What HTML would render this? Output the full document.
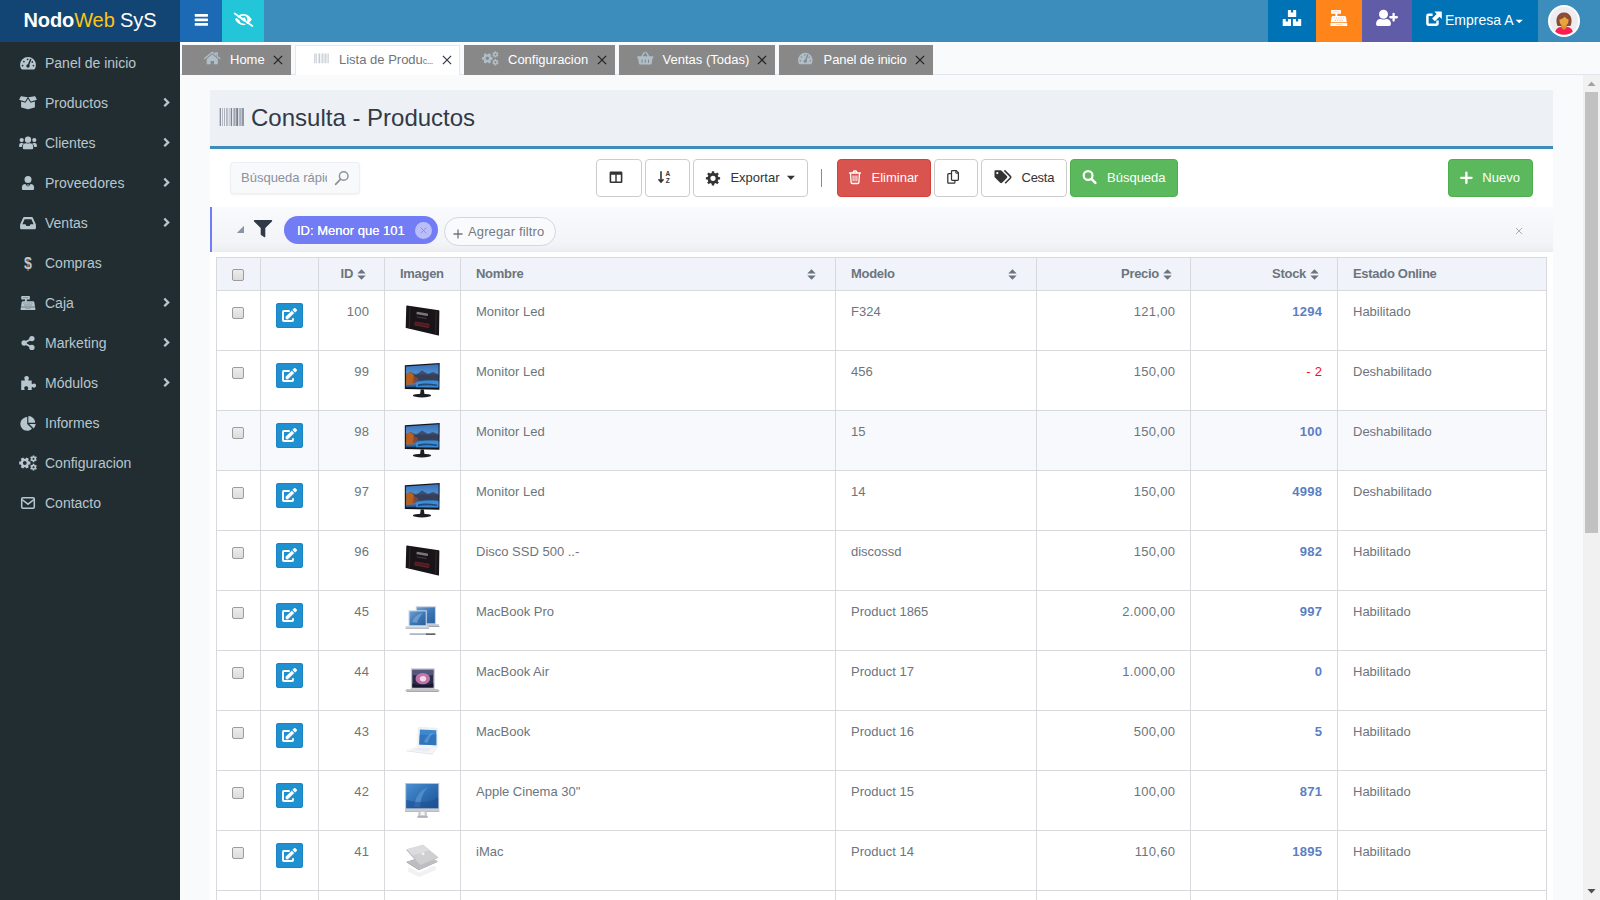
<!DOCTYPE html>
<html lang="es">
<head>
<meta charset="utf-8">
<title>Consulta - Productos</title>
<style>
*{box-sizing:border-box;margin:0;padding:0}
html,body{width:1600px;height:900px;overflow:hidden}
body{font-family:"Liberation Sans",sans-serif;font-size:13px;color:#6c757d;background:#f9fafc;position:relative}
.abs{position:absolute}
svg{display:block}
/* header */
#hdr{position:absolute;left:0;top:0;width:1600px;height:42px;background:#3c8dbc}
#logo{position:absolute;left:0;top:0;width:180px;height:42px;background:#124573;color:#fff;font-size:20px;line-height:40px;text-align:center;white-space:nowrap;letter-spacing:-0.1px}
#logo b{font-weight:bold}
#logo .w{color:#fdc413}
.hb{position:absolute;top:0;height:42px}
/* sidebar */
#side{position:absolute;left:0;top:42px;width:180px;height:858px;background:#222d32}
.mi{position:absolute;left:0;width:180px;height:40px;margin-top:1px;color:#b8c7ce;font-size:14px;line-height:40px}
.mi span{position:absolute;left:45px;top:0;white-space:nowrap}
.mi svg.ic{position:absolute;left:18px;top:10.500px}
.mi svg.ch{position:absolute;left:162px;top:14px}
/* tabs */
#tabs{position:absolute;left:180px;top:42px;width:1420px;height:33px;background:#f9fafc;border-bottom:1px solid #dfe6ef}
#tabs:before{content:"";position:absolute;left:0;top:0;width:100%;height:3px;background:linear-gradient(#fff,#f9fafc)}
.tab{position:absolute;top:3px;height:30px;background:#888;color:#fff;font-size:13px;line-height:29px;white-space:nowrap}
.tab.act{background:#fff;color:#6c757d;box-shadow:inset 1px 1px 0 #e3e8f1,inset -1px 0 0 #e3e8f1}
.tab span{position:absolute;top:0}
.tab svg{position:absolute}
/* panel */
#ph{position:absolute;left:210px;top:90px;width:1343px;height:56px;background:#edf0f5}
#pl{position:absolute;left:210px;top:146px;width:1343px;height:3px;background:#3c8dbc}
#tb{position:absolute;left:210px;top:149px;width:1343px;height:751px;background:#fff}
#title{position:absolute;left:251px;top:101px;font-size:24px;line-height:34px;color:#313a46;white-space:nowrap}
.btn{position:absolute;top:159px;height:38px;border-radius:4px;font-size:13px;line-height:35px;white-space:nowrap}
.btn.l{background:#fff;border:1px solid #ccc;color:#333}
.btn.r{background:#d9534f;border:1px solid #d43f3a;color:#fff}
.btn.g{background:#5cb85c;border:1px solid #4cae4c;color:#fff}
.btn span{position:absolute;top:0}
.btn svg{position:absolute}
/* filter */
#fl{position:absolute;left:210px;top:207px;width:1343px;height:45px;background:linear-gradient(#f9fafc 0,#f5f6f9 55%,#f3f4f7 80%,#ecedf1 100%);border-left:2px solid #727cf5}
/* table */
#tbl{position:absolute;left:216px;top:257px;width:1330px;border-collapse:collapse;table-layout:fixed;font-size:13px;color:#6c757d}
#tbl td,#tbl th{border:1px solid #d8d9dc;vertical-align:top;overflow:hidden;white-space:nowrap}
#tbl th{letter-spacing:-.3px;height:33px;background:#f1f3fa;color:#6c757d;font-weight:bold;text-align:left;padding:0 15px;line-height:31px;position:relative}
#tbl td{height:60px;background:#fff;padding:11.500px 15px 0 15px;line-height:17px;position:relative}
#tbl tr.hv td{background:#f8f9fc}
#tbl td.r{text-align:right;letter-spacing:.3px;padding-right:14.700px}#tbl th.r{text-align:right}
#tbl .st{font-weight:bold;color:#5b7fc4}
#tbl .neg{color:#fa0d0d;font-weight:normal}
.cb{position:absolute;left:14.500px;width:12px;height:12px;border:1px solid #9c9c9c;border-radius:2px;background:linear-gradient(#ececec,#dcdcdc)}
.eb{position:absolute;left:15px;top:12px;width:27px;height:25px;background:#1f91d0;border-radius:3px;box-shadow:inset 0 0 0 1px #1c84c2}
.th{position:absolute;left:17px;top:9px;width:40px;height:40px}
.so{position:absolute;top:11px}
</style>
</head>
<body>
<!--HEADER-->
<div id="hdr">
<div id="logo"><b>Nodo</b><span class="w">Web</span> SyS</div>
<div class="hb" style="left:180px;width:42px;background:#1c6ab4"></div>
<div class="hb" style="left:222px;width:42px;background:#23c6d8"></div>
<div class="hb" style="left:1268px;width:48px;background:#0073b7"></div>
<div class="hb" style="left:1316px;width:46px;background:#ff851b"></div>
<div class="hb" style="left:1362px;width:50px;background:#605ca8"></div>
<div class="hb" style="left:1412px;width:126px;background:#0073b7"></div>
<svg class="abs" style="left:192px;top:10px" width="18" height="20" viewBox="192 10 18 20"><rect x="194.700" y="14.100" width="13.300" height="2.600" rx=".6" fill="#fff"/><rect x="194.700" y="18.600" width="13.300" height="2.600" rx=".6" fill="#fff"/><rect x="194.700" y="23.100" width="13.300" height="2.600" rx=".6" fill="#fff"/></svg><svg class="abs" style="left:231px;top:9px" width="26" height="22" viewBox="231 9 26 22"><path d="M235 19.600 C237.300 15.600 240.200 14 243.400 14 S249.500 15.600 251.800 19.600 C249.500 23.600 246.600 25.200 243.400 25.200 S237.300 23.600 235 19.600z" fill="#fff"/><circle cx="243.400" cy="19.600" r="3.900" fill="#23c6d8"/><circle cx="243.400" cy="19.600" r="2.300" fill="#fff"/><path d="M241.300 18.900 a2.300 2.300 0 0 1 2.300-1.700" stroke="#23c6d8" stroke-width=".9" fill="none"/><path d="M233.400 14.900 L250.800 27.300" stroke="#23c6d8" stroke-width="1.600"/><path d="M234.700 13.500 L252.400 26" stroke="#fff" stroke-width="1.750" stroke-linecap="round"/></svg><svg class="abs" style="left:1280px;top:8px" width="24" height="20" viewBox="1280 8 24 20"><path d="M1288.4 9.9 H1290.9295000000002 v2.9819999999999998 l1.1205000000000003 -0.852 l1.1205000000000003 0.852 v-2.9819999999999998 H1295.7 a.5.5 0 0 1 .5.5 V16.5 a.5.5 0 0 1 -.5.5 H1288.4 a.5.5 0 0 1 -.5-.5 V10.4 a.5.5 0 0 1 .5-.5z" fill="#fff"/><path d="M1283.2 18.9 H1285.7295000000001 v2.9819999999999998 l1.1205000000000003 -0.852 l1.1205000000000003 0.852 v-2.9819999999999998 H1290.5 a.5.5 0 0 1 .5.5 V25.5 a.5.5 0 0 1 -.5.5 H1283.2 a.5.5 0 0 1 -.5-.5 V19.4 a.5.5 0 0 1 .5-.5z" fill="#fff"/><path d="M1293.4 18.9 H1295.9295000000002 v2.9819999999999998 l1.1205000000000003 -0.852 l1.1205000000000003 0.852 v-2.9819999999999998 H1300.7 a.5.5 0 0 1 .5.5 V25.5 a.5.5 0 0 1 -.5.5 H1293.4 a.5.5 0 0 1 -.5-.5 V19.4 a.5.5 0 0 1 .5-.5z" fill="#fff"/></svg><svg class="abs" style="left:1328px;top:8px" width="22" height="20" viewBox="1328 8 22 20"><g transform="translate(1330.400,10)"><path d="M1.3 0 h8.600 a.6.6 0 0 1 .6.6 v2.600 a.6.6 0 0 1 -.6.6 h-2.900 v2.200 h7.250 a1.400 1.400 0 0 1 1.350 1.050 l.8 5.300 h-16 l.8-5.300 a1.400 1.400 0 0 1 1.350-1.050 h2.450 v-2.200 h-3.700 a.6.6 0 0 1 -.6-.6 v-2.600 a.6.6 0 0 1 .6-.6z" fill="#fff"/><path d="M.5 12.900 h15.800 a.5.5 0 0 1 .5.5 v2 a.5.5 0 0 1 -.5.5 h-15.800 a.5.5 0 0 1 -.5-.5 v-2 a.500.500 0 0 1 .5-.5z" fill="#fff"/><rect x="2.500" y="1.200" width="6.200" height="1.300" fill="#ff851b" opacity=".3"/><rect x="3.2" y="7.300" width="1" height="1.300" fill="#ff851b" opacity=".45"/><rect x="5.5" y="7.300" width="1" height="1.300" fill="#ff851b" opacity=".45"/><rect x="7.8" y="7.300" width="1" height="1.300" fill="#ff851b" opacity=".45"/><rect x="10.1" y="7.300" width="1" height="1.300" fill="#ff851b" opacity=".45"/><rect x="12.4" y="7.300" width="1" height="1.300" fill="#ff851b" opacity=".45"/><rect x="4.4" y="9.700" width="1" height="1" fill="#ff851b" opacity=".8"/><rect x="6.7" y="9.700" width="1" height="1" fill="#ff851b" opacity=".8"/><rect x="9" y="9.700" width="1" height="1" fill="#ff851b" opacity=".8"/><rect x="11.3" y="9.700" width="1" height="1" fill="#ff851b" opacity=".8"/><rect x="5.400" y="13.900" width="6" height="1" fill="#ff851b" opacity=".3"/></g></svg><svg class="abs" style="left:1374px;top:8px" width="26" height="20" viewBox="1374 8 26 20"><circle cx="1383.500" cy="14.300" r="4.500" fill="#fff"/><path d="M1376.100 24.300 v-1.100 a4.300 4.300 0 0 1 4.300-4.300 h.5 a6 6 0 0 0 5.200 0 h.5 a4.300 4.300 0 0 1 4.300 4.300 v1.100 a1.600 1.600 0 0 1 -1.600 1.600 h-11.600 a1.600 1.600 0 0 1 -1.600-1.600z" fill="#fff"/><path d="M1393.600 14 v6.500 M1390.350 17.250 h6.500" stroke="#fff" stroke-width="2.300" stroke-linecap="round"/></svg><svg class="abs" style="left:1424px;top:9px" width="20" height="19" viewBox="1424 9 20 19"><path d="M1437.500 20.500 v3.100 a1.200 1.200 0 0 1 -1.200 1.200 H1428.600 a1.200 1.200 0 0 1 -1.200-1.200 V15.900 a1.200 1.200 0 0 1 1.200-1.200 h4" fill="none" stroke="#fff" stroke-width="2.500"/><path d="M1434.400 11.600 h6.900 a.5.5 0 0 1 .5.5 v6.900 l-2.300-2.300 -4.600 4.600 -2.800-2.800 4.600-4.600z" fill="#fff"/></svg><div class="abs" style="left:1445px;top:0;line-height:40px;font-size:14px;color:#fff;white-space:nowrap">Empresa A</div><svg class="abs" style="left:1514px;top:18px" width="10" height="7" viewBox="1514 18 10 7"><path d="M1515.600 19.700 h7.200 l-3.600 3.600z" fill="#fff"/></svg><svg class="abs" style="left:1548px;top:5px" width="32" height="32" viewBox="0 0 32 32"><defs><clipPath id="av"><circle cx="16" cy="16" r="13.800"/></clipPath></defs><circle cx="16" cy="16" r="16" fill="#fff"/><circle cx="16" cy="16" r="14" fill="#ececf1"/><g clip-path="url(#av)"><path d="M9.500 21 C7.300 16 8.200 7.600 16 7.600 s8.700 8.400 6.500 13.400z" fill="#8a4a36"/><path d="M6.600 32 c0-7.600 2.600-10.400 9.400-10.400 s9.400 2.800 9.400 10.400z" fill="#fa1e4e"/><path d="M13.500 19.500 h5 v3.200 l-2.500 2.300 -2.500-2.300z" fill="#d9902f"/><ellipse cx="16" cy="15.400" rx="4.500" ry="5.500" fill="#eaa43c"/><path d="M11.200 14.500 c.4-3.400 2.600-4.600 5.100-4.400 c2.500.2 4.300 1.600 4.500 4.400 c-1.800-.6-3.300-1.700-4.200-3.100 c-1.300 1.700-3 2.700-5.400 3.100z" fill="#8a4a36"/></g></svg>
</div>
<!--SIDEBAR-->
<div id="side">
<div class="mi" style="top:0px"><svg class="ic" width="20" height="18" viewBox="0 0 20 18"><path d="M2.1 10.9 a7.9 7.9 0 0 1 15.8 0 c0 1.6-.45 3-1.2 4.2 a.9.9 0 0 1 -.75.4 h-11.9 a.9.9 0 0 1 -.75-.4 c-.75-1.2-1.2-2.6-1.2-4.2z" fill="#b8c7ce"/><path d="M12.6 5.4 L10.3 11.6" stroke="#222d32" stroke-width="1.5" stroke-linecap="round"/><circle cx="10" cy="12.1" r="1.75" fill="#222d32"/><circle cx="4.6" cy="11.6" r=".85" fill="#222d32"/><circle cx="5.9" cy="7.6" r=".85" fill="#222d32"/><circle cx="9.6" cy="5.3" r=".85" fill="#222d32"/><circle cx="14.3" cy="7.9" r=".85" fill="#222d32"/><circle cx="15.4" cy="11.6" r=".85" fill="#222d32"/></svg><span>Panel de inicio</span></div>
<div class="mi" style="top:40px"><svg class="ic" width="20" height="18" viewBox="0 0 20 18"><path d="M1.1 5.7 L2.7 2.6 a.5.5 0 0 1 .5-.25 L9.7 3.2 L7.3 7.3 a.5.5 0 0 1 -.55.2z M18.9 5.7 L17.3 2.6 a.5.5 0 0 0 -.5-.25 L10.3 3.2 L12.7 7.3 a.5.5 0 0 0 .55.2z" fill="#b8c7ce"/><path d="M3.1 7.6 V12.9 a.7.7 0 0 0 .5.65 L9.8 15.2 a.9.9 0 0 0 .4 0 L16.4 13.55 a.7.7 0 0 0 .5-.65 V7.6 L13.4 8.6 a1.2 1.2 0 0 1 -1.35-.55 L10 4.7 L7.95 8.05 a1.2 1.2 0 0 1 -1.35.55z" fill="#b8c7ce"/></svg><span>Productos</span><svg class="ch" width="10" height="12" viewBox="0 0 10 12"><path d="M2.300 1.500 L6.200 5.400 L2.300 9.300" fill="none" stroke="#b8c7ce" stroke-width="2.300"/></svg></div>
<div class="mi" style="top:80px"><svg class="ic" width="20" height="18" viewBox="0 0 20 18"><circle cx="10" cy="5.7" r="3.15" fill="#b8c7ce"/><circle cx="3.7" cy="6.1" r="2.1" fill="#b8c7ce"/><circle cx="16.3" cy="6.1" r="2.1" fill="#b8c7ce"/><path d="M4.8 14 v-1.3 a3.4 3.4 0 0 1 3.4-3.4 h.4 a3.6 3.6 0 0 0 2.8 0 h.4 a3.4 3.4 0 0 1 3.4 3.4 v1.3 a1.3 1.3 0 0 1 -1.3 1.3 h-7.8 a1.3 1.3 0 0 1 -1.3-1.3z" fill="#b8c7ce"/><path d="M1.1 12.3 v-1 a2.2 2.2 0 0 1 2.2-2.2 h.9 a2.2 2.2 0 0 1 1.5.6 a4.5 4.5 0 0 0 -2 3.2 h-2 a.6.6 0 0 1 -.6-.6z M18.9 12.3 v-1 a2.2 2.2 0 0 0 -2.2-2.2 h-.9 a2.2 2.2 0 0 0 -1.5.6 a4.5 4.5 0 0 1 2 3.2 h2 a.6.6 0 0 0 .6-.6z" fill="#b8c7ce"/></svg><span>Clientes</span><svg class="ch" width="10" height="12" viewBox="0 0 10 12"><path d="M2.300 1.500 L6.200 5.400 L2.300 9.300" fill="none" stroke="#b8c7ce" stroke-width="2.300"/></svg></div>
<div class="mi" style="top:120px"><svg class="ic" width="20" height="18" viewBox="0 0 20 18"><circle cx="10" cy="5.5" r="3.5" fill="#b8c7ce"/><path d="M3.9 14.7 v-.9 a3.7 3.7 0 0 1 3.5-3.7 L10 13.5 L12.6 10.1 a3.7 3.7 0 0 1 3.5 3.7 v.9 a1.3 1.3 0 0 1 -1.3 1.3 h-9.6 a1.3 1.3 0 0 1 -1.3-1.3z" fill="#b8c7ce"/><path d="M9.1 10.4 h1.8 l-.5 1 .7 3.2 L10 16 8.9 14.6 l.7-3.2z" fill="#b8c7ce"/></svg><span>Proveedores</span><svg class="ch" width="10" height="12" viewBox="0 0 10 12"><path d="M2.300 1.500 L6.200 5.400 L2.300 9.300" fill="none" stroke="#b8c7ce" stroke-width="2.300"/></svg></div>
<div class="mi" style="top:160px"><svg class="ic" width="20" height="18" viewBox="0 0 20 18"><path fill-rule="evenodd" d="M2.1 10.6 L5 3.9 a1.3 1.3 0 0 1 1.2-.8 h7.6 a1.3 1.3 0 0 1 1.2.8 L17.9 10.6 V14 a1.3 1.3 0 0 1 -1.3 1.3 H3.4 a1.3 1.3 0 0 1 -1.3-1.3z M4.4 10.2 h3.1 l.9 1.75 h3.2 l.9-1.75 h3.1 L13.4 5.3 H6.6z" fill="#b8c7ce"/></svg><span>Ventas</span><svg class="ch" width="10" height="12" viewBox="0 0 10 12"><path d="M2.300 1.500 L6.200 5.400 L2.300 9.300" fill="none" stroke="#b8c7ce" stroke-width="2.300"/></svg></div>
<div class="mi" style="top:200px"><svg class="ic" width="20" height="18" viewBox="0 0 20 18"><text x="11.500" y="15.200" text-anchor="middle" font-family="Liberation Sans" font-weight="bold" font-size="16.500" fill="#b8c7ce" transform="scale(.86,1)">$</text></svg><span>Compras</span></div>
<div class="mi" style="top:240px"><svg class="ic" width="20" height="18" viewBox="0 0 20 18"><g transform="translate(2.650,2.050) scale(.875)"><path d="M1.3 0 h8.600 a.6.6 0 0 1 .6.6 v2.600 a.6.6 0 0 1 -.6.6 h-2.900 v2.200 h7.250 a1.400 1.400 0 0 1 1.350 1.050 l.8 5.300 h-16 l.8-5.300 a1.400 1.400 0 0 1 1.350-1.050 h2.450 v-2.200 h-3.700 a.6.6 0 0 1 -.6-.6 v-2.600 a.6.6 0 0 1 .6-.6z" fill="#b8c7ce"/><path d="M.5 12.900 h15.800 a.5.5 0 0 1 .5.5 v2 a.5.5 0 0 1 -.5.5 h-15.800 a.5.5 0 0 1 -.5-.5 v-2 a.500.500 0 0 1 .5-.5z" fill="#b8c7ce"/><rect x="2.500" y="1.200" width="6.200" height="1.300" fill="#222d32" opacity=".3"/><rect x="3.2" y="7.300" width="1" height="1.300" fill="#222d32" opacity=".45"/><rect x="5.5" y="7.300" width="1" height="1.300" fill="#222d32" opacity=".45"/><rect x="7.8" y="7.300" width="1" height="1.300" fill="#222d32" opacity=".45"/><rect x="10.1" y="7.300" width="1" height="1.300" fill="#222d32" opacity=".45"/><rect x="12.4" y="7.300" width="1" height="1.300" fill="#222d32" opacity=".45"/><rect x="4.4" y="9.700" width="1" height="1" fill="#222d32" opacity=".8"/><rect x="6.7" y="9.700" width="1" height="1" fill="#222d32" opacity=".8"/><rect x="9" y="9.700" width="1" height="1" fill="#222d32" opacity=".8"/><rect x="11.3" y="9.700" width="1" height="1" fill="#222d32" opacity=".8"/><rect x="5.400" y="13.900" width="6" height="1" fill="#222d32" opacity=".3"/></g></svg><span>Caja</span><svg class="ch" width="10" height="12" viewBox="0 0 10 12"><path d="M2.300 1.500 L6.200 5.400 L2.300 9.300" fill="none" stroke="#b8c7ce" stroke-width="2.300"/></svg></div>
<div class="mi" style="top:280px"><svg class="ic" width="20" height="18" viewBox="0 0 20 18"><path d="M13.9 4.6 L6 9 L13.9 13.4" fill="none" stroke="#b8c7ce" stroke-width="1.8"/><circle cx="13.9" cy="4.6" r="2.65" fill="#b8c7ce"/><circle cx="6.1" cy="9" r="2.65" fill="#b8c7ce"/><circle cx="13.9" cy="13.4" r="2.65" fill="#b8c7ce"/></svg><span>Marketing</span><svg class="ch" width="10" height="12" viewBox="0 0 10 12"><path d="M2.300 1.500 L6.200 5.400 L2.300 9.300" fill="none" stroke="#b8c7ce" stroke-width="2.300"/></svg></div>
<div class="mi" style="top:320px"><svg class="ic" width="20" height="18" viewBox="0 0 20 18"><path d="M3.2 6.6 h3.2 c.5 0 .7-.3.5-.8 c-.3-.5-.6-1-.6-1.7 c0-1.2 1-2.1 2.3-2.1 s2.3.9 2.3 2.1 c0 .7-.3 1.200-.6 1.700 c-.2.500 0 .800.500.800 h2.900 v3 c0 .500.300.700.800.500 c.500-.300.900-.600 1.600-.600 c1.200 0 2 .9 2 2.100 s-.8 2.100-2 2.100 c-.700 0-1.100-.300-1.600-.600 c-.500-.200-.800 0-.800.500 v2.400 h-3.500 c-.500 0-.700-.300-.500-.800 c.300-.400.500-.800.500-1.300 c0-1-.9-1.700-2-1.700 s-2 .7-2 1.700 c0 .5.200.9.500 1.300 c.200.500 0 .800-.500.800 h-3z" fill="#b8c7ce"/></svg><span>Módulos</span><svg class="ch" width="10" height="12" viewBox="0 0 10 12"><path d="M2.300 1.500 L6.200 5.400 L2.300 9.300" fill="none" stroke="#b8c7ce" stroke-width="2.300"/></svg></div>
<div class="mi" style="top:360px"><svg class="ic" width="20" height="18" viewBox="0 0 20 18"><path d="M9.2 3.1 V9.9 L14 14.7 A6.8 6.8 0 1 1 9.2 3.1z" fill="#b8c7ce"/><path d="M10.4 2.1 a6.8 6.8 0 0 1 6.8 6.700 h-6.800z" fill="#b8c7ce"/><path d="M11.3 10.100 h6.400 a6.800 6.800 0 0 1 -2 4.400z" fill="#b8c7ce"/></svg><span>Informes</span></div>
<div class="mi" style="top:400px"><svg class="ic" width="20" height="18" viewBox="0 0 20 18"><path fill-rule="evenodd" d="M10.82 7.48 L12.42 7.56 L12.42 10.44 L10.82 10.52 L10.13 11.72 L10.86 13.14 L8.36 14.59 L7.49 13.24 L6.11 13.24 L5.24 14.59 L2.74 13.14 L3.47 11.72 L2.78 10.52 L1.18 10.44 L1.18 7.56 L2.78 7.48 L3.47 6.28 L2.74 4.86 L5.24 3.41 L6.11 4.76 L7.49 4.76 L8.36 3.41 L10.86 4.86 L10.13 6.28z M4.90 9.00 a1.9 1.9 0 1 0 3.8 0 a1.9 1.9 0 1 0 -3.8 0z" fill="#b8c7ce"/><path fill-rule="evenodd" d="M17.84 3.92 L18.89 3.93 L18.89 5.67 L17.84 5.68 L17.43 6.38 L17.95 7.30 L16.44 8.17 L15.90 7.27 L15.10 7.27 L14.56 8.17 L13.05 7.30 L13.57 6.38 L13.16 5.68 L12.11 5.67 L12.11 3.93 L13.16 3.92 L13.57 3.22 L13.05 2.30 L14.56 1.43 L15.10 2.33 L15.90 2.33 L16.44 1.43 L17.95 2.30 L17.43 3.22z M14.50 4.80 a1.0 1.0 0 1 0 2.0 0 a1.0 1.0 0 1 0 -2.0 0z" fill="#b8c7ce" transform="rotate(30 15.5 4.8)"/><path fill-rule="evenodd" d="M17.84 12.32 L18.89 12.33 L18.89 14.07 L17.84 14.08 L17.43 14.78 L17.95 15.70 L16.44 16.57 L15.90 15.67 L15.10 15.67 L14.56 16.57 L13.05 15.70 L13.57 14.78 L13.16 14.08 L12.11 14.07 L12.11 12.33 L13.16 12.32 L13.57 11.62 L13.05 10.70 L14.56 9.83 L15.10 10.73 L15.90 10.73 L16.44 9.83 L17.95 10.70 L17.43 11.62z M14.50 13.20 a1.0 1.0 0 1 0 2.0 0 a1.0 1.0 0 1 0 -2.0 0z" fill="#b8c7ce" transform="rotate(30 15.5 13.2)"/></svg><span>Configuracion</span></div>
<div class="mi" style="top:440px"><svg class="ic" width="20" height="18" viewBox="0 0 20 18"><rect x="3.7" y="3.7" width="12.6" height="10.6" rx="1.2" fill="none" stroke="#b8c7ce" stroke-width="1.5"/><path d="M4 5.500 L10 10.200 L16 5.500" fill="none" stroke="#b8c7ce" stroke-width="1.5"/></svg><span>Contacto</span></div>

</div>
<!--TABS-->
<div id="tabs">
<div class="tab" style="left:2px;width:109px"><svg class="ti" style="left:21.4px;top:5.450px;width:18.600px;height:16.700px" width="20" height="18" viewBox="0 0 20 18"><path d="M10 4.700 L4 9.700 V15 a.5.5 0 0 0 .5.5 h3.700 v-3.700 h3.600 v3.700 h3.700 a.5.5 0 0 0 .5-.5 V9.700z" fill="#aebfc9"/><path d="M1.800 9.300 L10 2.500 L13.600 5.500 V3.200 h1.700 V6.900 L18.200 9.300" fill="none" stroke="#aebfc9" stroke-width="1.4" stroke-linejoin="round" stroke-linecap="round"/></svg><span style="left:48px">Home</span><svg style="left:90.5px;top:9.500px" width="10" height="10" viewBox="0 0 10 10"><path d="M.9.9 L9.100 9.100 M9.100.9 L.9 9.100" stroke="#222" stroke-width="1.250"/></svg></div>
<div class="tab act" style="left:115px;width:165px"><svg class="ti" style="left:17.4px;top:5.450px;width:18.600px;height:16.700px" width="20" height="18" viewBox="0 0 20 18"><rect x="2.1" y="3.700" width="0.7" height="10.600" fill="#b9bfca"/><rect x="3.6" y="3.700" width="0.4" height="10.600" fill="#b9bfca"/><rect x="4.7" y="3.700" width="0.7" height="10.600" fill="#b9bfca"/><rect x="6.6" y="3.700" width="0.4" height="10.600" fill="#b9bfca"/><rect x="7.7" y="3.700" width="1.1" height="10.600" fill="#b9bfca"/><rect x="9.9" y="3.700" width="0.4" height="10.600" fill="#b9bfca"/><rect x="11" y="3.700" width="0.7" height="10.600" fill="#b9bfca"/><rect x="12.5" y="3.700" width="0.4" height="10.600" fill="#b9bfca"/><rect x="13.6" y="3.700" width="1.1" height="10.600" fill="#b9bfca"/><rect x="15.5" y="3.700" width="0.4" height="10.600" fill="#b9bfca"/><rect x="16.6" y="3.700" width="0.4" height="10.600" fill="#b9bfca"/><rect x="17.3" y="3.700" width="0.6" height="10.600" fill="#b9bfca"/></svg><span style="left:44px">Lista de Produ<span style="position:static;font-size:9px;letter-spacing:-.5px">c...</span></span><svg style="left:146.5px;top:9.500px" width="10" height="10" viewBox="0 0 10 10"><path d="M.9.9 L9.100 9.100 M9.100.9 L.9 9.100" stroke="#313a46" stroke-width="1.250"/></svg></div>
<div class="tab" style="left:284px;width:151px"><svg class="ti" style="left:17.4px;top:5.450px;width:18.600px;height:16.700px" width="20" height="18" viewBox="0 0 20 18"><path fill-rule="evenodd" d="M10.82 7.48 L12.42 7.56 L12.42 10.44 L10.82 10.52 L10.13 11.72 L10.86 13.14 L8.36 14.59 L7.49 13.24 L6.11 13.24 L5.24 14.59 L2.74 13.14 L3.47 11.72 L2.78 10.52 L1.18 10.44 L1.18 7.56 L2.78 7.48 L3.47 6.28 L2.74 4.86 L5.24 3.41 L6.11 4.76 L7.49 4.76 L8.36 3.41 L10.86 4.86 L10.13 6.28z M4.90 9.00 a1.9 1.9 0 1 0 3.8 0 a1.9 1.9 0 1 0 -3.8 0z" fill="#aebfc9"/><path fill-rule="evenodd" d="M17.84 3.92 L18.89 3.93 L18.89 5.67 L17.84 5.68 L17.43 6.38 L17.95 7.30 L16.44 8.17 L15.90 7.27 L15.10 7.27 L14.56 8.17 L13.05 7.30 L13.57 6.38 L13.16 5.68 L12.11 5.67 L12.11 3.93 L13.16 3.92 L13.57 3.22 L13.05 2.30 L14.56 1.43 L15.10 2.33 L15.90 2.33 L16.44 1.43 L17.95 2.30 L17.43 3.22z M14.50 4.80 a1.0 1.0 0 1 0 2.0 0 a1.0 1.0 0 1 0 -2.0 0z" fill="#aebfc9" transform="rotate(30 15.5 4.8)"/><path fill-rule="evenodd" d="M17.84 12.32 L18.89 12.33 L18.89 14.07 L17.84 14.08 L17.43 14.78 L17.95 15.70 L16.44 16.57 L15.90 15.67 L15.10 15.67 L14.56 16.57 L13.05 15.70 L13.57 14.78 L13.16 14.08 L12.11 14.07 L12.11 12.33 L13.16 12.32 L13.57 11.62 L13.05 10.70 L14.56 9.83 L15.10 10.73 L15.90 10.73 L16.44 9.83 L17.95 10.70 L17.43 11.62z M14.50 13.20 a1.0 1.0 0 1 0 2.0 0 a1.0 1.0 0 1 0 -2.0 0z" fill="#aebfc9" transform="rotate(30 15.5 13.2)"/></svg><span style="left:44px">Configuracion</span><svg style="left:132.5px;top:9.500px" width="10" height="10" viewBox="0 0 10 10"><path d="M.9.9 L9.100 9.100 M9.100.9 L.9 9.100" stroke="#222" stroke-width="1.250"/></svg></div>
<div class="tab" style="left:439px;width:156px"><svg class="ti" style="left:17.4px;top:5.450px;width:18.600px;height:16.700px" width="20" height="18" viewBox="0 0 20 18"><path d="M6.300 7 L9 2.600 M13.700 7 L11 2.600" stroke="#aebfc9" stroke-width="1.5" stroke-linecap="round"/><path d="M1.900 6.800 h16.200 a.6.6 0 0 1 .6.6 v.9 a.6.6 0 0 1 -.6.6 h-.3 l-.9 5.600 a1.300 1.300 0 0 1 -1.300 1.100 H4.400 a1.300 1.300 0 0 1 -1.300-1.100 L2.200 8.900 h-.3 a.6.6 0 0 1 -.6-.6 v-.9 a.6.6 0 0 1 .6-.6z" fill="#aebfc9"/><rect x="5.95" y="10" width="1.1" height="3.900" rx=".5" fill="#888"/><rect x="9.45" y="10" width="1.1" height="3.900" rx=".5" fill="#888"/><rect x="12.95" y="10" width="1.1" height="3.900" rx=".5" fill="#888"/></svg><span style="left:43.6px">Ventas (Todas)</span><svg style="left:137.5px;top:9.500px" width="10" height="10" viewBox="0 0 10 10"><path d="M.9.9 L9.100 9.100 M9.100.9 L.9 9.100" stroke="#222" stroke-width="1.250"/></svg></div>
<div class="tab" style="left:599px;width:154px"><svg class="ti" style="left:17.4px;top:5.450px;width:18.600px;height:16.700px" width="20" height="18" viewBox="0 0 20 18"><path d="M2.1 10.9 a7.9 7.9 0 0 1 15.8 0 c0 1.6-.45 3-1.2 4.2 a.9.9 0 0 1 -.75.4 h-11.9 a.9.9 0 0 1 -.75-.4 c-.75-1.2-1.2-2.6-1.2-4.2z" fill="#aebfc9"/><path d="M12.6 5.4 L10.3 11.6" stroke="#888" stroke-width="1.5" stroke-linecap="round"/><circle cx="10" cy="12.1" r="1.75" fill="#888"/><circle cx="4.6" cy="11.6" r=".85" fill="#888"/><circle cx="5.9" cy="7.6" r=".85" fill="#888"/><circle cx="9.6" cy="5.3" r=".85" fill="#888"/><circle cx="14.3" cy="7.9" r=".85" fill="#888"/><circle cx="15.4" cy="11.6" r=".85" fill="#888"/></svg><span style="left:44.6px"><span style="position:static;letter-spacing:-.1px">Panel de inicio</span></span><svg style="left:135.5px;top:9.500px" width="10" height="10" viewBox="0 0 10 10"><path d="M.9.9 L9.100 9.100 M9.100.9 L.9 9.100" stroke="#222" stroke-width="1.250"/></svg></div>

</div>
<!--PANEL-->
<div id="ph"></div><div id="pl"></div><div id="tb"></div>
<div id="title">Consulta - Productos</div>
<div class="abs" style="left:230px;top:162px;width:130px;height:32px;background:#f8f9fb;border:1px solid #edeff4;border-radius:4px;box-shadow:0 1px 2px rgba(200,205,215,.25)"><span class="abs" style="left:10px;top:0;line-height:30px;font-size:13px;color:#8a929b;white-space:nowrap;width:86px;overflow:hidden">Búsqueda rápida</span><svg class="abs" style="left:102px;top:6px" width="18" height="18" viewBox="0 0 18 18"><circle cx="10.700" cy="7" r="4.300" fill="none" stroke="#8a929b" stroke-width="1.500"/><path d="M7.600 10.200 L2.600 15.300" stroke="#8a929b" stroke-width="1.700" stroke-linecap="round"/></svg></div><div class="btn l" style="left:596px;width:46px"></div><div class="btn l" style="left:645px;width:45px"></div><div class="btn l" style="left:693px;width:115px"><span style="left:36.39999999999998px;letter-spacing:0px">Exportar</span></div><div class="btn r" style="left:837px;width:94px"><span style="left:33.5px;letter-spacing:0px">Eliminar</span></div><div class="btn l" style="left:934px;width:44px"></div><div class="btn l" style="left:981px;width:86px"><span style="left:39.5px;letter-spacing:-0.25px">Cesta</span></div><div class="btn g" style="left:1070px;width:108px"><span style="left:36px;letter-spacing:0px">Búsqueda</span></div><div class="btn g" style="left:1448px;width:85px"><span style="left:33.299999999999955px;letter-spacing:0px">Nuevo</span></div><div class="abs" style="left:821px;top:169px;width:1px;height:18px;background:#8a8a8a"></div><svg class="abs" style="left:608px;top:169px" width="17" height="17" viewBox="608 169 17 17"><path fill-rule="evenodd" d="M610.800 171.600 h10.400 a1.200 1.200 0 0 1 1.200 1.200 v9 a1.200 1.200 0 0 1 -1.200 1.200 h-10.400 a1.200 1.200 0 0 1 -1.200-1.200 v-9 a1.200 1.200 0 0 1 1.200-1.200z M611.200 174.700 v6.700 h4.100 v-6.700z M616.700 174.700 v6.700 h4.100 v-6.700z" fill="#333"/></svg><svg class="abs" style="left:656px;top:168px" width="18" height="18" viewBox="656 168 18 18"><path d="M661 171.300 v10.300 M658.500 179.300 L661 182.100 L663.500 179.300" fill="none" stroke="#333" stroke-width="1.600"/><text x="665.600" y="176.100" font-family="Liberation Sans" font-weight="bold" font-size="6.500" fill="#333">A</text><text x="665.800" y="183" font-family="Liberation Sans" font-weight="bold" font-size="6.500" fill="#333">Z</text></svg><svg class="abs" style="left:704px;top:169px" width="18" height="19" viewBox="704 169 18 19"><path fill-rule="evenodd" d="M718.35 177.02 L720.10 177.13 L720.10 179.47 L718.35 179.58 L717.69 181.18 L718.85 182.50 L717.20 184.15 L715.88 182.99 L714.28 183.65 L714.17 185.40 L711.83 185.40 L711.72 183.65 L710.12 182.99 L708.80 184.15 L707.15 182.50 L708.31 181.18 L707.65 179.58 L705.90 179.47 L705.90 177.13 L707.65 177.02 L708.31 175.42 L707.15 174.10 L708.80 172.45 L710.12 173.61 L711.72 172.95 L711.83 171.20 L714.17 171.20 L714.28 172.95 L715.88 173.61 L717.20 172.45 L718.85 174.10 L717.69 175.42z M710.40 178.30 a2.6 2.6 0 1 0 5.2 0 a2.6 2.6 0 1 0 -5.2 0z" fill="#333"/></svg><svg class="abs" style="left:785px;top:174px" width="12" height="8" viewBox="785 174 12 8"><path d="M786.900 175.700 h8 l-4 4.400z" fill="#333"/></svg><svg class="abs" style="left:847px;top:168px" width="16" height="18" viewBox="847 168 16 18"><path d="M850.500 173.400 l.65 9.200 a1 1 0 0 0 1 .9 h5.700 a1 1 0 0 0 1-.9 l.65-9.200" fill="none" stroke="#fff" stroke-width="1.300"/><path d="M849.500 173 h11 M853 172.700 l.8-1.700 h2.400 l.8 1.700" fill="none" stroke="#fff" stroke-width="1.300" stroke-linecap="round" stroke-linejoin="round"/><path d="M853.100 175.500 v5.800 M855 175.500 v5.800 M856.900 175.500 v5.800" stroke="#fff" stroke-width="1"/></svg><svg class="abs" style="left:945px;top:168px" width="16" height="18" viewBox="945 168 16 18"><path d="M951.500 170.600 h4.700 l2.200 2.200 v6.800 a.8.8 0 0 1 -.8.8 h-5.300 a.8.8 0 0 1 -.8-.8 v-8.200 a.800.800 0 0 1 .8-.8z" fill="none" stroke="#333" stroke-width="1.250"/><path d="M955.900 170.800 v2.400 h2.400" fill="none" stroke="#333" stroke-width="1"/><path d="M950.900 173.600 h-2.300 a.8.8 0 0 0 -.8.8 v8 a.8.8 0 0 0 .8.8 h5.500 a.8.800 0 0 0 .8-.8 v-1.500" fill="none" stroke="#333" stroke-width="1.250"/></svg><svg class="abs" style="left:993px;top:168px" width="20" height="18" viewBox="993 168 20 18"><path d="M994.500 171.100 a.9.9 0 0 1 .9-.9 h5 a1.500 1.500 0 0 1 1 .4 l5.500 5.500 a1.250 1.250 0 0 1 0 1.800 l-4.900 4.900 a1.250 1.250 0 0 1 -1.800 0 L994.900 177.400 a1.500 1.500 0 0 1 -.4-1z" fill="#333"/><circle cx="997.300" cy="173.100" r="1.100" fill="#fff"/><path d="M1004.400 170.400 l6 6 a1.100 1.100 0 0 1 0 1.600 l-5.200 5.200" fill="none" stroke="#333" stroke-width="1.500"/></svg><svg class="abs" style="left:1081px;top:168px" width="18" height="18" viewBox="1081 168 18 18"><circle cx="1088.100" cy="175.500" r="4.400" fill="none" stroke="#fff" stroke-width="2.200"/><path d="M1091.700 179.100 L1095.400 182.800" stroke="#fff" stroke-width="2.500" stroke-linecap="round"/></svg><svg class="abs" style="left:1459px;top:170px" width="16" height="16" viewBox="1459 170 16 16"><path d="M1466.400 172.600 v10.400 M1461.200 177.800 h10.400" stroke="#fff" stroke-width="2.300" stroke-linecap="round"/></svg>
<div id="fl"></div>
<svg class="abs" style="left:236px;top:225px" width="9" height="9"><path d="M8 .8 V8 H.8z" fill="#8a96a8"/></svg><svg class="abs" style="left:253px;top:219px" width="20" height="20" viewBox="0 0 20 20"><path d="M1.700 1.100 h16.600 a.8.8 0 0 1 .6 1.400 L12.300 9.100 V17.500 a.8.8 0 0 1 -1.300.6 l-2.900-2 a1 1 0 0 1 -.4-.8 V9.100 L1.100 2.500 a.8.8 0 0 1 .6-1.400z" fill="#313a46"/></svg><div class="abs" style="left:284px;top:216px;width:154px;height:28px;border-radius:14px;background:#727cf5;color:#fff;font-size:13px;line-height:28px"><span class="abs" style="left:13px;top:.7px;white-space:nowrap;text-shadow:0 0 .4px #fff">ID: Menor que 101</span><div class="abs" style="left:131px;top:5.500px;width:17px;height:17px;border-radius:9px;background:#b9bdfa"></div><svg class="abs" style="left:136px;top:10.500px" width="7" height="7"><path d="M.7.700 L6.300 6.300 M6.300.700 L.7 6.300" stroke="#8d93c9" stroke-width="1"/></svg></div><div class="abs" style="left:444px;top:217px;width:112px;height:29px;border-radius:15px;border:1px solid #d3d6de;background:#f9fafc;color:#727b85;font-size:13px;line-height:27px"><svg class="abs" style="left:8px;top:10.500px" width="10" height="10"><path d="M5 .5 v9 M.5 5 h9" stroke="#6c757d" stroke-width="1.300"/></svg><span class="abs" style="left:23px;top:0;white-space:nowrap;letter-spacing:.13px">Agregar filtro</span></div><svg class="abs" style="left:1515px;top:227px" width="8" height="8"><path d="M1 1 L7 7 M7 1 L1 7" stroke="#a4afb8" stroke-width="1"/></svg><svg class="abs" style="left:219px;top:107px" width="26" height="20" viewBox="0 0 26 20"><rect x="0.7" y="1" width="1.2" height="18" fill="#7e8694"/><rect x="3" y="1" width="0.8" height="18" fill="#a8adb7"/><rect x="5.2" y="1" width="0.8" height="18" fill="#9aa0ab"/><rect x="7.4" y="1" width="1.1" height="18" fill="#8e95a2"/><rect x="9.8" y="1" width="0.7" height="18" fill="#a8adb7"/><rect x="11.7" y="1" width="1.3" height="18" fill="#7e8694"/><rect x="13.9" y="1" width="0.7" height="18" fill="#9aa0ab"/><rect x="15.3" y="1" width="1.1" height="18" fill="#7e8694"/><rect x="17.3" y="1" width="1.6" height="18" fill="#6a7180"/><rect x="19.8" y="1" width="0.8" height="18" fill="#8e95a2"/><rect x="21.4" y="1" width="1" height="18" fill="#7e8694"/><rect x="23.3" y="1" width="1.4" height="18" fill="#6a7180"/></svg>
<table id="tbl"><colgroup><col style="width:44px"><col style="width:58px"><col style="width:66px"><col style="width:76px"><col style="width:375px"><col style="width:201px"><col style="width:154px"><col style="width:147px"><col style="width:209px"></colgroup>
<tr><th><div class="cb" style="top:11px"></div></th><th></th><th class="r" style="padding-right:31px">ID<svg class="so" width="9" height="11" viewBox="0 0 9 11" style="right:18.500px"><path d="M0.3 4.6 L4.5 0.3 L8.7 4.6z M0.3 6.4 L8.7 6.4 L4.5 10.7z" fill="#6c757d"/></svg></th><th>Imagen</th><th>Nombre<svg class="so" width="9" height="11" viewBox="0 0 9 11" style="right:19px"><path d="M0.3 4.6 L4.5 0.3 L8.7 4.6z M0.3 6.4 L8.7 6.4 L4.5 10.7z" fill="#6c757d"/></svg></th><th>Modelo<svg class="so" width="9" height="11" viewBox="0 0 9 11" style="right:19px"><path d="M0.3 4.6 L4.5 0.3 L8.7 4.6z M0.3 6.4 L8.7 6.4 L4.5 10.7z" fill="#6c757d"/></svg></th><th class="r" style="padding-right:31px">Precio<svg class="so" width="9" height="11" viewBox="0 0 9 11" style="right:18.500px"><path d="M0.3 4.6 L4.5 0.3 L8.7 4.6z M0.3 6.4 L8.7 6.4 L4.5 10.7z" fill="#6c757d"/></svg></th><th class="r" style="padding-right:31px">Stock<svg class="so" width="9" height="11" viewBox="0 0 9 11" style="right:18.500px"><path d="M0.3 4.6 L4.5 0.3 L8.7 4.6z M0.3 6.4 L8.7 6.4 L4.5 10.7z" fill="#6c757d"/></svg></th><th>Estado Online</th></tr>
<tr><td><div class="cb" style="top:16px"></div></td><td><div class="eb"><svg class="abs" style="left:0;top:0" width="27" height="25" viewBox="0 0 27 25"><path d="M17 15.300 v1.900 a.8.8 0 0 1 -.8.8 H7.800 a.8.8 0 0 1 -.8-.8 V8.800 a.8.8 0 0 1 .8-.8 h5.900" fill="none" stroke="#fff" stroke-width="1.900"/><g transform="translate(9.900,15.900) rotate(-44.500)"><path d="M-.4 0 L.8-1.900 L3.200-1.900 H10.200 V1.900 H3.200 L.8 1.900z" fill="#fff" stroke="#1f91d0" stroke-width=".5"/><path d="M11-1.900 h2.300 a1 1 0 0 1 1 1 v1.800 a1 1 0 0 1 -1 1 h-2.300z" fill="#fff"/></g></svg></div></td><td class="r">100</td><td><svg class="th" width="40" height="40" viewBox="0 0 40 40"><path d="M5 5.400 L36.800 10.200 a.7.7 0 0 1 .6.700 L37 35 a.7.7 0 0 1 -.8.600 L4.300 28.100 a.7.7 0 0 1 -.6-.7 L4.300 6 a.7.7 0 0 1 .7-.6z" fill="#181417"/><path d="M7.200 6.500 L8.500 6.700 L8 28.500 L6.700 28.200z" fill="#2a2629"/><path d="M33.500 10.600 L34.800 10.800 L34.300 34 L33 33.700z" fill="#2a2629"/><g transform="rotate(9.500 20 15)"><rect x="14.300" y="12.600" width="11.500" height="2.600" rx=".6" fill="#c8c8ce" opacity=".55"/><rect x="15" y="17.300" width="10" height=".9" fill="#77777d" opacity=".5"/></g><g transform="rotate(10 20 26)"><rect x="12.200" y="22.600" width="15" height="4.200" rx=".6" fill="#7a262e" opacity=".75"/><rect x="13" y="24.200" width="13.400" height=".8" fill="#181417" opacity=".55"/></g></svg></td><td>Monitor Led</td><td>F324</td><td class="r">121,00</td><td class="r st">1294</td><td>Habilitado</td></tr>
<tr><td><div class="cb" style="top:16px"></div></td><td><div class="eb"><svg class="abs" style="left:0;top:0" width="27" height="25" viewBox="0 0 27 25"><path d="M17 15.300 v1.900 a.8.8 0 0 1 -.8.8 H7.800 a.8.8 0 0 1 -.8-.8 V8.800 a.8.8 0 0 1 .8-.8 h5.900" fill="none" stroke="#fff" stroke-width="1.900"/><g transform="translate(9.900,15.900) rotate(-44.500)"><path d="M-.4 0 L.8-1.900 L3.200-1.900 H10.200 V1.900 H3.200 L.8 1.900z" fill="#fff" stroke="#1f91d0" stroke-width=".5"/><path d="M11-1.900 h2.300 a1 1 0 0 1 1 1 v1.800 a1 1 0 0 1 -1 1 h-2.300z" fill="#fff"/></g></svg></div></td><td class="r">99</td><td><svg class="th" width="40" height="40" viewBox="0 0 40 40"><defs><linearGradient id="mg" x1="0" y1="0" x2="0" y2="1"><stop offset="0" stop-color="#3a70b8"/><stop offset=".38" stop-color="#4f8fd0"/><stop offset=".5" stop-color="#2a3d5c"/><stop offset=".68" stop-color="#2b4a70"/><stop offset=".8" stop-color="#3a8ad6"/><stop offset="1" stop-color="#1e4a80"/></linearGradient></defs><path d="M2.800 5.300 L37.700 2.900 L37.400 29.700 L2.800 29.100z" fill="#14171c"/><path d="M3.900 6.500 L36.600 4.200 L36.400 27.600 L3.900 27.200z" fill="url(#mg)"/><path d="M3.900 14.500 l5-2.500 5 3 6-4.500 6 3.500 5-2 5.600 2.500 -.1 5 -32.500 .5z" fill="#3b3f55" opacity=".8"/><path d="M4.200 14.500 c2-3 5-3 7.500.5 c1.500 3 .8 7.500-.8 9.500 l-6.700.2z" fill="#b8601f"/><path d="M11 17 c2-1 4 0 5 1.500 l-1 4 -4.500 1z" fill="#8a4a3a" opacity=".8"/><path d="M14 22.500 c6-2 14-2.500 22.400-1.500 l0 6.600 L14 27.300z" fill="#3d8edb" opacity=".9"/><path d="M16 24.500 c5-1.500 12-1 19 0 l0 1.500 c-7-1-13-1-19 .3z" fill="#1a2d4a" opacity=".7"/><path d="M18.700 29.500 h3.200 l.6 4.800 h-4.400z" fill="#1b1d22"/><ellipse cx="20" cy="35.600" rx="9.200" ry="1.800" fill="#1b1d22"/></svg></td><td>Monitor Led</td><td>456</td><td class="r">150,00</td><td class="r st neg">- 2</td><td>Deshabilitado</td></tr>
<tr class="hv"><td><div class="cb" style="top:16px"></div></td><td><div class="eb"><svg class="abs" style="left:0;top:0" width="27" height="25" viewBox="0 0 27 25"><path d="M17 15.300 v1.900 a.8.8 0 0 1 -.8.8 H7.800 a.8.8 0 0 1 -.8-.8 V8.800 a.8.8 0 0 1 .8-.8 h5.900" fill="none" stroke="#fff" stroke-width="1.900"/><g transform="translate(9.900,15.900) rotate(-44.500)"><path d="M-.4 0 L.8-1.900 L3.200-1.900 H10.200 V1.900 H3.200 L.8 1.900z" fill="#fff" stroke="#1f91d0" stroke-width=".5"/><path d="M11-1.900 h2.300 a1 1 0 0 1 1 1 v1.800 a1 1 0 0 1 -1 1 h-2.300z" fill="#fff"/></g></svg></div></td><td class="r">98</td><td><svg class="th" width="40" height="40" viewBox="0 0 40 40"><defs><linearGradient id="mg" x1="0" y1="0" x2="0" y2="1"><stop offset="0" stop-color="#3a70b8"/><stop offset=".38" stop-color="#4f8fd0"/><stop offset=".5" stop-color="#2a3d5c"/><stop offset=".68" stop-color="#2b4a70"/><stop offset=".8" stop-color="#3a8ad6"/><stop offset="1" stop-color="#1e4a80"/></linearGradient></defs><path d="M2.800 5.300 L37.700 2.900 L37.400 29.700 L2.800 29.100z" fill="#14171c"/><path d="M3.900 6.500 L36.600 4.200 L36.400 27.600 L3.900 27.200z" fill="url(#mg)"/><path d="M3.900 14.500 l5-2.500 5 3 6-4.500 6 3.500 5-2 5.600 2.500 -.1 5 -32.500 .5z" fill="#3b3f55" opacity=".8"/><path d="M4.200 14.500 c2-3 5-3 7.500.5 c1.500 3 .8 7.500-.8 9.500 l-6.700.2z" fill="#b8601f"/><path d="M11 17 c2-1 4 0 5 1.500 l-1 4 -4.500 1z" fill="#8a4a3a" opacity=".8"/><path d="M14 22.500 c6-2 14-2.500 22.400-1.500 l0 6.600 L14 27.300z" fill="#3d8edb" opacity=".9"/><path d="M16 24.500 c5-1.500 12-1 19 0 l0 1.500 c-7-1-13-1-19 .3z" fill="#1a2d4a" opacity=".7"/><path d="M18.700 29.500 h3.200 l.6 4.800 h-4.400z" fill="#1b1d22"/><ellipse cx="20" cy="35.600" rx="9.200" ry="1.800" fill="#1b1d22"/></svg></td><td>Monitor Led</td><td>15</td><td class="r">150,00</td><td class="r st">100</td><td>Deshabilitado</td></tr>
<tr><td><div class="cb" style="top:16px"></div></td><td><div class="eb"><svg class="abs" style="left:0;top:0" width="27" height="25" viewBox="0 0 27 25"><path d="M17 15.300 v1.900 a.8.8 0 0 1 -.8.8 H7.800 a.8.8 0 0 1 -.8-.8 V8.800 a.8.8 0 0 1 .8-.8 h5.900" fill="none" stroke="#fff" stroke-width="1.900"/><g transform="translate(9.900,15.900) rotate(-44.500)"><path d="M-.4 0 L.8-1.900 L3.200-1.900 H10.200 V1.900 H3.200 L.8 1.900z" fill="#fff" stroke="#1f91d0" stroke-width=".5"/><path d="M11-1.900 h2.300 a1 1 0 0 1 1 1 v1.800 a1 1 0 0 1 -1 1 h-2.300z" fill="#fff"/></g></svg></div></td><td class="r">97</td><td><svg class="th" width="40" height="40" viewBox="0 0 40 40"><defs><linearGradient id="mg" x1="0" y1="0" x2="0" y2="1"><stop offset="0" stop-color="#3a70b8"/><stop offset=".38" stop-color="#4f8fd0"/><stop offset=".5" stop-color="#2a3d5c"/><stop offset=".68" stop-color="#2b4a70"/><stop offset=".8" stop-color="#3a8ad6"/><stop offset="1" stop-color="#1e4a80"/></linearGradient></defs><path d="M2.800 5.300 L37.700 2.900 L37.400 29.700 L2.800 29.100z" fill="#14171c"/><path d="M3.900 6.500 L36.600 4.200 L36.400 27.600 L3.900 27.200z" fill="url(#mg)"/><path d="M3.900 14.500 l5-2.500 5 3 6-4.500 6 3.500 5-2 5.600 2.500 -.1 5 -32.500 .5z" fill="#3b3f55" opacity=".8"/><path d="M4.200 14.500 c2-3 5-3 7.500.5 c1.500 3 .8 7.500-.8 9.500 l-6.700.2z" fill="#b8601f"/><path d="M11 17 c2-1 4 0 5 1.500 l-1 4 -4.500 1z" fill="#8a4a3a" opacity=".8"/><path d="M14 22.500 c6-2 14-2.500 22.400-1.500 l0 6.600 L14 27.300z" fill="#3d8edb" opacity=".9"/><path d="M16 24.500 c5-1.500 12-1 19 0 l0 1.500 c-7-1-13-1-19 .3z" fill="#1a2d4a" opacity=".7"/><path d="M18.700 29.500 h3.200 l.6 4.800 h-4.400z" fill="#1b1d22"/><ellipse cx="20" cy="35.600" rx="9.200" ry="1.800" fill="#1b1d22"/></svg></td><td>Monitor Led</td><td>14</td><td class="r">150,00</td><td class="r st">4998</td><td>Deshabilitado</td></tr>
<tr><td><div class="cb" style="top:16px"></div></td><td><div class="eb"><svg class="abs" style="left:0;top:0" width="27" height="25" viewBox="0 0 27 25"><path d="M17 15.300 v1.900 a.8.8 0 0 1 -.8.8 H7.800 a.8.8 0 0 1 -.8-.8 V8.800 a.8.8 0 0 1 .8-.8 h5.900" fill="none" stroke="#fff" stroke-width="1.900"/><g transform="translate(9.900,15.900) rotate(-44.500)"><path d="M-.4 0 L.8-1.900 L3.200-1.900 H10.200 V1.900 H3.200 L.8 1.900z" fill="#fff" stroke="#1f91d0" stroke-width=".5"/><path d="M11-1.900 h2.300 a1 1 0 0 1 1 1 v1.800 a1 1 0 0 1 -1 1 h-2.300z" fill="#fff"/></g></svg></div></td><td class="r">96</td><td><svg class="th" width="40" height="40" viewBox="0 0 40 40"><path d="M5 5.400 L36.800 10.200 a.7.7 0 0 1 .6.700 L37 35 a.7.7 0 0 1 -.8.600 L4.300 28.100 a.7.7 0 0 1 -.6-.7 L4.300 6 a.7.7 0 0 1 .7-.6z" fill="#181417"/><path d="M7.200 6.500 L8.500 6.700 L8 28.500 L6.700 28.200z" fill="#2a2629"/><path d="M33.500 10.600 L34.800 10.800 L34.300 34 L33 33.700z" fill="#2a2629"/><g transform="rotate(9.500 20 15)"><rect x="14.300" y="12.600" width="11.500" height="2.600" rx=".6" fill="#c8c8ce" opacity=".55"/><rect x="15" y="17.300" width="10" height=".9" fill="#77777d" opacity=".5"/></g><g transform="rotate(10 20 26)"><rect x="12.200" y="22.600" width="15" height="4.200" rx=".6" fill="#7a262e" opacity=".75"/><rect x="13" y="24.200" width="13.400" height=".8" fill="#181417" opacity=".55"/></g></svg></td><td>Disco SSD 500 ..-</td><td>discossd</td><td class="r">150,00</td><td class="r st">982</td><td>Habilitado</td></tr>
<tr><td><div class="cb" style="top:16px"></div></td><td><div class="eb"><svg class="abs" style="left:0;top:0" width="27" height="25" viewBox="0 0 27 25"><path d="M17 15.300 v1.900 a.8.8 0 0 1 -.8.8 H7.800 a.8.8 0 0 1 -.8-.8 V8.800 a.8.8 0 0 1 .8-.8 h5.900" fill="none" stroke="#fff" stroke-width="1.900"/><g transform="translate(9.900,15.900) rotate(-44.500)"><path d="M-.4 0 L.8-1.900 L3.200-1.900 H10.200 V1.900 H3.200 L.8 1.900z" fill="#fff" stroke="#1f91d0" stroke-width=".5"/><path d="M11-1.900 h2.300 a1 1 0 0 1 1 1 v1.800 a1 1 0 0 1 -1 1 h-2.300z" fill="#fff"/></g></svg></div></td><td class="r">45</td><td><svg class="th" width="40" height="40" viewBox="0 0 40 40"><defs><linearGradient id="pg" x1="0" y1="0" x2="1" y2="1"><stop offset="0" stop-color="#6fa0d0"/><stop offset=".5" stop-color="#3e78b6"/><stop offset="1" stop-color="#2a5f9c"/></linearGradient></defs><path d="M13.800 6.200 h20.200 v18.500 h-20.200z" fill="#c3d2e3"/><path d="M14.900 7.300 h18 v16 h-18z" fill="url(#pg)"/><path d="M24.500 24.300 h12.300 l.6 2.100 h-12.900z" fill="#bcc4cf"/><path d="M24.500 26 h12.900 v.8 h-12.900z" fill="#8f97a3"/><path d="M6.500 10.300 h18.300 v16 H6.500z" fill="#c8d6e6"/><path d="M7.600 11.400 h16.100 v13.800 H7.600z" fill="url(#pg)"/><path d="M10 22 c3-6 6-8 11-9 c-3 3-5 6-6 10z" fill="#9fc3e6" opacity=".45"/><path d="M4 26.200 h22.800 l.4 1.600 H3.600z" fill="#d4dae2"/><path d="M3.600 27.700 h23.600 v.9 H3.600z" fill="#8f97a3"/><path d="M7.700 33.300 h17 v1.600 h-17z" fill="#a9aeb6"/><path d="M24 33.300 h9.400 v1.700 H24z" fill="#5f646c"/></svg></td><td>MacBook Pro</td><td>Product 1865</td><td class="r">2.000,00</td><td class="r st">997</td><td>Habilitado</td></tr>
<tr><td><div class="cb" style="top:16px"></div></td><td><div class="eb"><svg class="abs" style="left:0;top:0" width="27" height="25" viewBox="0 0 27 25"><path d="M17 15.300 v1.900 a.8.8 0 0 1 -.8.8 H7.800 a.8.8 0 0 1 -.8-.8 V8.800 a.8.8 0 0 1 .8-.8 h5.900" fill="none" stroke="#fff" stroke-width="1.900"/><g transform="translate(9.900,15.900) rotate(-44.500)"><path d="M-.4 0 L.8-1.900 L3.200-1.900 H10.200 V1.900 H3.200 L.8 1.900z" fill="#fff" stroke="#1f91d0" stroke-width=".5"/><path d="M11-1.900 h2.300 a1 1 0 0 1 1 1 v1.800 a1 1 0 0 1 -1 1 h-2.300z" fill="#fff"/></g></svg></div></td><td class="r">44</td><td><svg class="th" width="40" height="40" viewBox="0 0 40 40"><path d="M8.900 8.300 h23.900 v20.800 H8.900z" fill="#c9c9cf"/><path d="M10.300 9.800 h21.100 v17.800 H10.300z" fill="#2d2a4a"/><path d="M10.300 9.800 h21.100 v5 c-7 2-14 2-21.100 0z" fill="#5a6488" opacity=".8"/><ellipse cx="20.800" cy="18.700" rx="7.300" ry="5.600" fill="#d77fb8" opacity=".85"/><ellipse cx="21" cy="18.700" rx="3.200" ry="2.700" fill="#f6d9ea"/><path d="M10.300 23.500 c7 2 14 2 21.100 0 v4.100 H10.300z" fill="#14142a" opacity=".8"/><path d="M4.500 29.100 h31 l2.200 1.700 H3.400z" fill="#c4c4c6"/><path d="M3.400 30.800 h34.300 l-1.500 .9 H5z" fill="#8b8b8f"/></svg></td><td>MacBook Air</td><td>Product 17</td><td class="r">1.000,00</td><td class="r st">0</td><td>Habilitado</td></tr>
<tr><td><div class="cb" style="top:16px"></div></td><td><div class="eb"><svg class="abs" style="left:0;top:0" width="27" height="25" viewBox="0 0 27 25"><path d="M17 15.300 v1.900 a.8.8 0 0 1 -.8.8 H7.800 a.8.8 0 0 1 -.8-.8 V8.800 a.8.8 0 0 1 .8-.8 h5.900" fill="none" stroke="#fff" stroke-width="1.900"/><g transform="translate(9.900,15.900) rotate(-44.500)"><path d="M-.4 0 L.8-1.900 L3.200-1.900 H10.200 V1.900 H3.200 L.8 1.900z" fill="#fff" stroke="#1f91d0" stroke-width=".5"/><path d="M11-1.900 h2.300 a1 1 0 0 1 1 1 v1.800 a1 1 0 0 1 -1 1 h-2.300z" fill="#fff"/></g></svg></div></td><td class="r">43</td><td><svg class="th" width="40" height="40" viewBox="0 0 40 40"><path d="M16.400 7.300 L35.300 8.200 L35.300 27.100 L15.500 26.100z" fill="#f0f2f5" stroke="#e2e5ea" stroke-width=".5"/><path d="M17.900 9.600 L34.300 10.300 L34.300 25.300 L17.200 24.500z" fill="#3d88cf"/><path d="M17.700 15 c5-1 9 2 16.600 -1 v11.300 L17.200 24.500z" fill="#2c6fb8" opacity=".75"/><path d="M22 22 c2-5 5-8 10-10 c-3 3-5 6-6.500 11z" fill="#8bbbe8" opacity=".4"/><path d="M4.200 30.500 L15.500 26.100 L35.300 27.100 L30.500 33.800z" fill="#f4f5f8"/><path d="M4.200 30.500 L30.500 33.800 v.9 L4.200 31.300z" fill="#dfe3ea"/><path d="M30.500 33.800 L35.300 27.100 v.9 L30.500 34.700z" fill="#e6e9ef"/><path d="M10 30 L17 27.500 L30 28.300 L26 31.800z" fill="#e9ecf2"/></svg></td><td>MacBook</td><td>Product 16</td><td class="r">500,00</td><td class="r st">5</td><td>Habilitado</td></tr>
<tr><td><div class="cb" style="top:16px"></div></td><td><div class="eb"><svg class="abs" style="left:0;top:0" width="27" height="25" viewBox="0 0 27 25"><path d="M17 15.300 v1.900 a.8.8 0 0 1 -.8.8 H7.800 a.8.8 0 0 1 -.8-.8 V8.800 a.8.8 0 0 1 .8-.8 h5.900" fill="none" stroke="#fff" stroke-width="1.900"/><g transform="translate(9.900,15.900) rotate(-44.500)"><path d="M-.4 0 L.8-1.900 L3.200-1.900 H10.200 V1.900 H3.200 L.8 1.900z" fill="#fff" stroke="#1f91d0" stroke-width=".5"/><path d="M11-1.900 h2.300 a1 1 0 0 1 1 1 v1.800 a1 1 0 0 1 -1 1 h-2.300z" fill="#fff"/></g></svg></div></td><td class="r">42</td><td><svg class="th" width="40" height="40" viewBox="0 0 40 40"><defs><linearGradient id="cg" x1="0" y1="0" x2="1" y2="1"><stop offset="0" stop-color="#4c8fd2"/><stop offset=".5" stop-color="#2f6fb5"/><stop offset="1" stop-color="#1d5294"/></linearGradient></defs><path d="M3.200 2.900 h34 v28.700 h-34z" fill="#b9c1cc"/><path d="M4.200 3.900 h32 v24.500 h-32z" fill="url(#cg)"/><path d="M12 27 c1-9 5-16 14-20 c-5 5-7 11-8 20z" fill="#7db2e6" opacity=".4"/><path d="M4.200 20 c10 3 22 3 32-2 v10.400 h-32z" fill="#1b4e90" opacity=".55"/><path d="M3.200 28.400 h34 v3.200 h-34z" fill="#c9ccd3"/><path d="M3.200 31.200 h34 v.5 h-34z" fill="#9a9fa8"/><path d="M16.600 31.700 h8 l.6 4.600 h-9.200z" fill="#c5c8ce"/><path d="M18.500 31.700 h4.200 v3.500 h-4.200z" fill="#f4f5f7"/><path d="M15.400 36.200 h10.300 v1.500 H15.400z" fill="#9ea3ab"/></svg></td><td>Apple Cinema 30"</td><td>Product 15</td><td class="r">100,00</td><td class="r st">871</td><td>Habilitado</td></tr>
<tr><td><div class="cb" style="top:16px"></div></td><td><div class="eb"><svg class="abs" style="left:0;top:0" width="27" height="25" viewBox="0 0 27 25"><path d="M17 15.300 v1.900 a.8.8 0 0 1 -.8.8 H7.800 a.8.8 0 0 1 -.8-.8 V8.800 a.8.8 0 0 1 .8-.8 h5.900" fill="none" stroke="#fff" stroke-width="1.900"/><g transform="translate(9.900,15.900) rotate(-44.500)"><path d="M-.4 0 L.8-1.900 L3.200-1.900 H10.200 V1.900 H3.200 L.8 1.900z" fill="#fff" stroke="#1f91d0" stroke-width=".5"/><path d="M11-1.900 h2.300 a1 1 0 0 1 1 1 v1.800 a1 1 0 0 1 -1 1 h-2.300z" fill="#fff"/></g></svg></div></td><td class="r">41</td><td><svg class="th" width="40" height="40" viewBox="0 0 40 40"><path d="M4.700 9.300 L21.100 4.800 L36.200 16.900 L18.300 25z" fill="#cfcfd2"/><path d="M4.700 9.300 L21.100 4.800 L28 10.300 L10.500 15.500z" fill="#dcdcdf"/><path d="M4.700 9.300 L18.300 25 v.9 L4.700 10.300z" fill="#a4a4a8"/><path d="M18.300 25 L36.200 16.900 v.9 L18.300 25.900z" fill="#b2b2b6"/><circle cx="21" cy="13.800" r="1.500" fill="#efeff1"/><path d="M4.700 21.600 L12.700 19 L18.300 25.500 L32.500 19.500 L35.500 21 L17 29.300z" fill="#bdbdc1"/><path d="M4.700 21.600 L17 29.300 v1 L4.700 22.600z" fill="#99999d"/><path d="M17 29.300 L35.500 21 v1 L17 30.300z" fill="#a9a9ad"/><path d="M7 27 L17 32.500 L33 25.500 L34 30 L17 37 L6 31.500z" fill="#eeeef0" opacity=".8"/></svg></td><td>iMac</td><td>Product 14</td><td class="r">110,60</td><td class="r st">1895</td><td>Habilitado</td></tr>
<tr><td></td><td></td><td></td><td></td><td></td><td></td><td></td><td></td><td></td></tr>
</table>
<!--SCROLL-->
<div class="abs" style="left:1583px;top:75px;width:17px;height:825px;background:#f1f1f1"></div>
<div class="abs" style="left:1585px;top:92px;width:13px;height:441px;background:#c1c1c1"></div>
<svg class="abs" style="left:1583px;top:75px" width="17" height="17"><path d="M4.5 11 L8.5 6.5 L12.5 11z" fill="#a3a3a3"/></svg>
<svg class="abs" style="left:1583px;top:883px" width="17" height="17"><path d="M4.5 6 L8.5 10.5 L12.5 6z" fill="#505050"/></svg>
</body>
</html>
